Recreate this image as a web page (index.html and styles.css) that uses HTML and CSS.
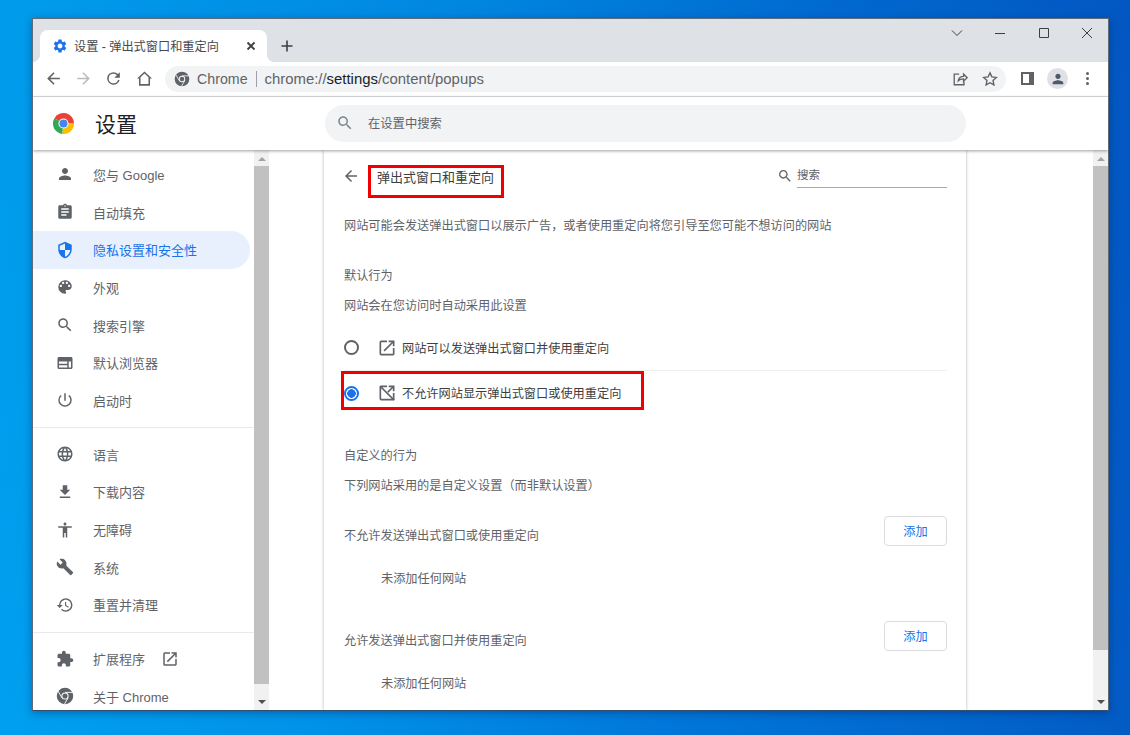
FILE: index.html
```html
<!DOCTYPE html>
<html lang="zh-CN">
<head>
  <meta charset="utf-8" />
  <title>设置 - 弹出式窗口和重定向</title>
  <link rel="stylesheet" href="styles.css">
</head>
<body>
  <!-- shared icons -->
  <svg class="sprite" width="0" height="0" aria-hidden="true">
    <symbol id="i-person" viewBox="0 0 24 24"><path d="M12 12c2.21 0 4-1.79 4-4s-1.79-4-4-4-4 1.79-4 4 1.79 4 4 4zm0 2c-2.67 0-8 1.34-8 4v2h16v-2c0-2.66-5.33-4-8-4z"/></symbol>
    <symbol id="i-clip" viewBox="0 0 24 24"><path d="M19 3h-4.18C14.4 1.84 13.3 1 12 1c-1.3 0-2.4.84-2.82 2H5c-1.1 0-2 .9-2 2v14c0 1.1.9 2 2 2h14c1.1 0 2-.9 2-2V5c0-1.1-.9-2-2-2zm-7 0c.55 0 1 .45 1 1s-.45 1-1 1-1-.45-1-1 .45-1 1-1zm2 14H7v-2h7v2zm3-4H7v-2h10v2zm0-4H7V7h10v2z"/></symbol>
    <symbol id="i-shield" viewBox="0 0 24 24"><path d="M12 1L3 5v6c0 5.55 3.84 10.74 9 12 5.16-1.26 9-6.45 9-12V5l-9-4zm0 10.99h7c-.53 4.12-3.28 7.79-7 8.94V12H5V6.3l7-3.11v8.8z"/></symbol>
    <symbol id="i-palette" viewBox="0 0 24 24"><path d="M12 3a9 9 0 0 0 0 18c.83 0 1.5-.67 1.5-1.5 0-.39-.15-.74-.39-1.01-.23-.26-.38-.61-.38-.99 0-.83.67-1.5 1.5-1.5H16c2.76 0 5-2.24 5-5 0-4.42-4.03-8-9-8zm-5.5 9c-.83 0-1.5-.67-1.5-1.5S5.67 9 6.5 9 8 9.67 8 10.5 7.33 12 6.5 12zm3-4C8.67 8 8 7.33 8 6.5S8.67 5 9.5 5s1.5.67 1.5 1.5S10.33 8 9.5 8zm5 0c-.83 0-1.5-.67-1.5-1.5S13.67 5 14.5 5s1.5.67 1.5 1.5S15.33 8 14.5 8zm3 4c-.83 0-1.5-.67-1.5-1.5S16.67 9 17.5 9s1.5.67 1.5 1.5-.67 1.5-1.5 1.5z"/></symbol>
    <symbol id="i-search" viewBox="0 0 24 24"><path d="M15.5 14h-.79l-.28-.27C15.41 12.59 16 11.11 16 9.5 16 5.91 13.09 3 9.5 3S3 5.91 3 9.5 5.91 16 9.5 16c1.61 0 3.09-.59 4.23-1.57l.27.28v.79l5 4.99L20.49 19l-4.99-5zm-6 0C7.01 14 5 11.99 5 9.5S7.01 5 9.5 5 14 7.01 14 9.5 11.99 14 9.5 14z"/></symbol>
    <symbol id="i-web" viewBox="0 0 24 24"><path d="M20 4H4c-1.1 0-2 .9-2 2v12c0 1.1.9 2 2 2h16c1.1 0 2-.9 2-2V6c0-1.1-.9-2-2-2zM4 10h11v3H4v-3zm0 5h11v3H4v-3zm16 3h-3v-8h3v8z"/></symbol>
    <symbol id="i-power" viewBox="0 0 24 24"><path d="M13 3h-2v10h2V3zm4.83 2.17l-1.42 1.42A6.92 6.92 0 0 1 19 12c0 3.87-3.13 7-7 7A6.995 6.995 0 0 1 7.58 6.58L6.17 5.17A8.932 8.932 0 0 0 3 12a9 9 0 0 0 18 0c0-2.74-1.23-5.18-3.17-6.83z"/></symbol>
    <symbol id="i-globe" viewBox="0 0 24 24"><path d="M11.99 2C6.47 2 2 6.48 2 12s4.47 10 9.99 10C17.52 22 22 17.52 22 12S17.52 2 11.99 2zm6.93 6h-2.95a15.65 15.65 0 0 0-1.38-3.56A8.03 8.03 0 0 1 18.92 8zM12 4.04c.83 1.2 1.48 2.53 1.91 3.96h-3.82c.43-1.43 1.08-2.76 1.91-3.96zM4.26 14C4.1 13.36 4 12.69 4 12s.1-1.36.26-2h3.38c-.08.66-.14 1.32-.14 2 0 .68.06 1.34.14 2H4.26zm.82 2h2.95c.32 1.25.78 2.45 1.38 3.56A7.987 7.987 0 0 1 5.08 16zm2.95-8H5.08a7.987 7.987 0 0 1 4.33-3.56A15.65 15.65 0 0 0 8.03 8zM12 19.96c-.83-1.2-1.48-2.53-1.91-3.96h3.82c-.43 1.43-1.08 2.76-1.91 3.96zM14.34 14H9.66c-.09-.66-.16-1.32-.16-2 0-.68.07-1.35.16-2h4.68c.09.65.16 1.32.16 2 0 .68-.07 1.34-.16 2zm.25 5.56c.6-1.11 1.06-2.31 1.38-3.56h2.95a8.03 8.03 0 0 1-4.33 3.56zM16.36 14c.08-.66.14-1.32.14-2 0-.68-.06-1.34-.14-2h3.38c.16.64.26 1.31.26 2s-.1 1.36-.26 2h-3.38z"/></symbol>
    <symbol id="i-download" viewBox="0 0 24 24"><path d="M19 9h-4V3H9v6H5l7 7 7-7zM5 18v2h14v-2H5z"/></symbol>
    <symbol id="i-access" viewBox="0 0 24 24"><path d="M12 2c1.1 0 2 .9 2 2s-.9 2-2 2-2-.9-2-2 .9-2 2-2zm9 7h-6v13h-2v-6h-2v6H9V9H3V7h18v2z"/></symbol>
    <symbol id="i-wrench" viewBox="0 0 24 24"><path d="M22.7 19l-9.1-9.1c.9-2.3.4-5-1.5-6.9-2-2-5-2.4-7.4-1.3L9 6 6 9 1.6 4.7C.4 7.1.9 10.1 2.9 12.1c1.9 1.9 4.6 2.4 6.9 1.5l9.1 9.1c.4.4 1 .4 1.4 0l2.3-2.3c.5-.4.5-1.1.1-1.4z"/></symbol>
    <symbol id="i-restore" viewBox="0 0 24 24"><path d="M13 3a9 9 0 0 0-9 9H1l3.89 3.89.07.14L9 12H6c0-3.87 3.13-7 7-7s7 3.13 7 7-3.13 7-7 7c-1.93 0-3.68-.79-4.94-2.06l-1.42 1.42A8.954 8.954 0 0 0 13 21a9 9 0 0 0 0-18zm-1 5v5l4.28 2.54.72-1.21-3.5-2.08V8H12z"/></symbol>
    <symbol id="i-puzzle" viewBox="0 0 24 24"><path d="M20.5 11H19V7c0-1.1-.9-2-2-2h-4V3.5C13 2.12 11.88 1 10.5 1S8 2.12 8 3.5V5H4c-1.1 0-1.99.9-1.99 2v3.8H3.5c1.49 0 2.7 1.21 2.7 2.7s-1.21 2.7-2.7 2.7H2V20c0 1.1.9 2 2 2h3.8v-1.5c0-1.49 1.21-2.7 2.7-2.7 1.49 0 2.7 1.21 2.7 2.7V22H17c1.1 0 2-.9 2-2v-4h1.5c1.38 0 2.5-1.12 2.5-2.5S21.88 11 20.5 11z"/></symbol>
    <symbol id="i-open" viewBox="0 0 24 24"><path d="M19 19H5V5h7V3H5a2 2 0 0 0-2 2v14a2 2 0 0 0 2 2h14c1.1 0 2-.9 2-2v-7h-2v7zM14 3v2h3.59l-9.83 9.83 1.41 1.41L19 6.41V10h2V3h-7z"/></symbol>
    <symbol id="i-blocked" viewBox="0 0 24 24"><path d="M19 19H5V5h7V3H5a2 2 0 0 0-2 2v14a2 2 0 0 0 2 2h14c1.1 0 2-.9 2-2v-7h-2v7zM14 3v2h3.59l-5.3 5.3 1.41 1.41L19 6.41V10h2V3h-7z"/><path d="M4.4 3l17 17-1.4 1.4-17-17z"/></symbol>
    <symbol id="i-back" viewBox="0 0 24 24"><path d="M20 11H7.83l5.59-5.59L12 4l-8 8 8 8 1.41-1.41L7.83 13H20v-2z"/></symbol>
    <symbol id="i-gear" viewBox="0 0 24 24"><path d="M19.14 12.94c.04-.3.06-.61.06-.94 0-.32-.02-.64-.07-.94l2.03-1.58a.49.49 0 0 0 .12-.61l-1.92-3.32a.488.488 0 0 0-.59-.22l-2.39.96c-.5-.38-1.03-.7-1.62-.94l-.36-2.54a.484.484 0 0 0-.48-.41h-3.84c-.24 0-.43.17-.47.41l-.36 2.54c-.59.24-1.13.57-1.62.94l-2.39-.96c-.22-.08-.47 0-.59.22L2.74 8.87c-.12.21-.08.47.12.61l2.03 1.58c-.05.3-.09.63-.09.94s.02.64.07.94l-2.03 1.58a.49.49 0 0 0-.12.61l1.92 3.32c.12.22.37.29.59.22l2.39-.96c.5.38 1.03.7 1.62.94l.36 2.54c.05.24.24.41.48.41h3.84c.24 0 .44-.17.47-.41l.36-2.54c.59-.24 1.13-.56 1.62-.94l2.39.96c.22.08.47 0 .59-.22l1.92-3.32c.12-.22.07-.47-.12-.61l-2.01-1.58zM12 15.6c-1.98 0-3.6-1.62-3.6-3.6s1.62-3.6 3.6-3.6 3.6 1.62 3.6 3.6-1.62 3.6-3.6 3.6z"/></symbol>
    <symbol id="i-chrome" viewBox="0 0 24 24"><path fill-rule="evenodd" d="M12 1a11 11 0 1 0 0 22 11 11 0 0 0 0-22zm0 6.2a4.8 4.8 0 1 1 0 9.6 4.8 4.8 0 0 1 0-9.6z"/><circle cx="12" cy="12" r="3.4"/><path fill="none" stroke="#fff" stroke-width="1.2" d="M12 7.2h10.500M7.840 14.400L2.600 5.300M16.160 14.400L11 23.300"/></symbol>
  </svg>

  <div class="window">
    <!-- tab strip -->
    <div class="tabstrip">
      <div class="tab">
        <svg class="tab-gear"><use href="#i-gear"/></svg>
        <span class="tab-title">设置 - 弹出式窗口和重定向</span>
        <svg class="tab-close" viewBox="0 0 10 10"><path d="M1.5 1.5l7 7M8.5 1.5l-7 7"/></svg>
      </div>
      <svg class="new-tab" viewBox="0 0 12 12"><path d="M6 .5v11M.5 6h11"/></svg>
      <div class="win-controls">
        <svg viewBox="0 0 12 12"><path d="M1 3.5l5 5 5-5"/></svg>
        <svg viewBox="0 0 12 12"><path d="M1 6.5h10"/></svg>
        <svg viewBox="0 0 12 12"><path d="M1.5 1.5h9v9h-9z"/></svg>
        <svg viewBox="0 0 12 12"><path d="M1 1l10 10M11 1L1 11"/></svg>
      </div>
    </div>

    <!-- toolbar -->
    <div class="toolbar">
      <svg class="tb-icon" viewBox="0 0 24 24"><use href="#i-back"/></svg>
      <svg class="tb-icon tb-off" viewBox="0 0 24 24"><path d="M4 11h12.170l-5.590-5.590L12 4l8 8-8 8-1.410-1.410L16.170 13H4v-2z"/></svg>
      <svg class="tb-icon" viewBox="0 0 24 24"><path d="M17.65 6.35A7.96 7.96 0 0 0 12 4a8 8 0 1 0 7.73 10h-2.08A6 6 0 1 1 12 6c1.66 0 3.14.69 4.22 1.78L13 11h7V4l-2.35 2.35z"/></svg>
      <svg class="tb-icon tb-home" viewBox="0 0 24 24"><path d="M12 3L2.500 12H5v9h14v-9h2.500L12 3zm5 16H7v-8.600l5-4.600 5 4.600V19z"/></svg>
      <div class="omnibox">
        <svg class="omni-chrome"><use href="#i-chrome"/></svg>
        <span class="omni-site">Chrome</span>
        <span class="omni-sep"></span>
        <span class="omni-url">chrome://<b>settings</b>/content/popups</span>
        <svg class="omni-icon omni-share" viewBox="0 0 18 18"><path d="M8 3.500H2.500v12h11V12M7 11c.6-3.200 2.800-5 6-5V3.500l4 4-4 3.900V8.800c-2.600 0-4.400.6-6 2.200z"/></svg>
        <svg class="omni-icon omni-star" viewBox="0 0 18 18"><path d="M9 2l2.100 4.600 5 .6-3.700 3.400 1 5L9 13.100l-4.400 2.500 1-5L1.900 7.200l5-.6z"/></svg>
      </div>
      <div class="panel-btn"></div>
      <div class="avatar"><svg><use href="#i-person"/></svg></div>
      <div class="dots"><i></i><i></i><i></i></div>
    </div>

    <!-- settings header -->
    <header class="page-head">
      <svg class="logo" viewBox="0 0 24 24">
        <path fill="#ea4335" d="M12 12L2.470 6.500A11 11 0 0 1 23 12z"/>
        <path fill="#fbbc04" d="M12 12L23 12A11 11 0 0 1 10.500 22.900z"/>
        <path fill="#34a853" d="M12 12L10.500 22.900A11 11 0 0 1 2.470 6.500z"/>
        <circle cx="12" cy="12" r="5.300" fill="#fff"/>
        <circle cx="12" cy="12" r="4.200" fill="#4285f4"/>
      </svg>
      <span class="page-title">设置</span>
      <div class="page-search">
        <svg><use href="#i-search"/></svg>
        <span>在设置中搜索</span>
      </div>
    </header>

    <div class="body">
      <!-- left menu -->
      <nav class="side">
        <div class="side-list">
          <a class="item"><svg><use href="#i-person"/></svg><span>您与 Google</span></a>
          <a class="item"><svg><use href="#i-clip"/></svg><span>自动填充</span></a>
          <a class="item active"><svg><use href="#i-shield"/></svg><span>隐私设置和安全性</span></a>
          <a class="item"><svg><use href="#i-palette"/></svg><span>外观</span></a>
          <a class="item"><svg><use href="#i-search"/></svg><span>搜索引擎</span></a>
          <a class="item"><svg><use href="#i-web"/></svg><span>默认浏览器</span></a>
          <a class="item"><svg><use href="#i-power"/></svg><span>启动时</span></a>
          <div class="side-line"></div>
          <a class="item"><svg><use href="#i-globe"/></svg><span>语言</span></a>
          <a class="item"><svg><use href="#i-download"/></svg><span>下载内容</span></a>
          <a class="item"><svg><use href="#i-access"/></svg><span>无障碍</span></a>
          <a class="item"><svg><use href="#i-wrench"/></svg><span>系统</span></a>
          <a class="item"><svg><use href="#i-restore"/></svg><span>重置并清理</span></a>
          <div class="side-line"></div>
          <a class="item"><svg><use href="#i-puzzle"/></svg><span>扩展程序</span><svg class="ext-link"><use href="#i-open"/></svg></a>
          <a class="item"><svg><use href="#i-chrome"/></svg><span>关于 Chrome</span></a>
        </div>
        <div class="scrollbar side-bar">
          <div class="arrow-up"></div>
          <div class="thumb"></div>
          <div class="arrow-down"></div>
        </div>
      </nav>

      <!-- settings page -->
      <main class="main">
        <section class="card">
          <div class="sub-head">
            <svg class="sub-back"><use href="#i-back"/></svg>
            <h1>弹出式窗口和重定向</h1>
            <span class="mark mark-title"></span>
            <div class="sub-search">
              <svg><use href="#i-search"/></svg>
              <span>搜索</span>
            </div>
          </div>
          <p class="desc">网站可能会发送弹出式窗口以展示广告，或者使用重定向将您引导至您可能不想访问的网站</p>

          <h2 class="group">默认行为</h2>
          <p class="note">网站会在您访问时自动采用此设置</p>
          <div class="radio-row first">
            <span class="radio"></span>
            <svg class="radio-icon"><use href="#i-open"/></svg>
            <span>网站可以发送弹出式窗口并使用重定向</span>
          </div>
          <div class="radio-row second">
            <span class="radio on"></span>
            <svg class="radio-icon"><use href="#i-blocked"/></svg>
            <span>不允许网站显示弹出式窗口或使用重定向</span>
            <span class="mark mark-radio"></span>
          </div>

          <h2 class="group group-custom">自定义的行为</h2>
          <p class="note">下列网站采用的是自定义设置（而非默认设置）</p>

          <div class="list-head list-block">
            <span>不允许发送弹出式窗口或使用重定向</span>
            <button class="add">添加</button>
          </div>
          <p class="empty">未添加任何网站</p>
          <div class="list-head list-allow">
            <span>允许发送弹出式窗口并使用重定向</span>
            <button class="add">添加</button>
          </div>
          <p class="empty">未添加任何网站</p>
        </section>
        <div class="scrollbar main-bar">
          <div class="arrow-up"></div>
          <div class="thumb"></div>
          <div class="arrow-down"></div>
        </div>
      </main>
    </div>
  </div>
</body>
</html>
```

FILE: styles.css
```css
/* page + desktop */
*,*::before,*::after{box-sizing:border-box;margin:0;padding:0;}

html,body{height:735px;overflow:hidden;}

body{
  font-family:"Liberation Sans","Noto Sans CJK SC",sans-serif;
  padding:18px 21px 24px 32px;
  background:
    linear-gradient(180deg,rgba(0,40,150,.08),rgba(0,160,240,.12)),
    linear-gradient(100deg,#00a6f2 0%,#0090e8 35%,#0070d6 65%,#0352bf 100%);
  color:#5f6368;
}

.sprite{position:absolute;}

svg{display:block;fill:currentColor;}

.window{
  width:1077px;
  height:693px;
  display:flex;
  flex-direction:column;
  background:#fff;
  border:1px solid #5f6b78;
  border-bottom-color:#2f4f70;
  box-shadow:0 2px 8px rgba(0,30,80,.4);
  overflow:hidden;
}

/* tab strip */
.tabstrip{
  height:43px;
  flex:none;
  display:flex;
  align-items:flex-end;
  background:#dee1e6;
  padding-left:7px;
}

.tab{
  position:relative;
  width:227px;
  height:32px;
  display:flex;
  align-items:center;
  background:#fff;
  border-radius:8px 8px 0 0;
  padding-left:12px;
  font-size:12.2px;
  color:#45494e;
}
.tab::before,.tab::after{
  content:"";
  position:absolute;
  bottom:0;
  width:8px;
  height:8px;
  background:radial-gradient(circle at 0 0,transparent 8px,#fff 8.5px);
}
.tab::before{left:-8px;}
.tab::after{right:-8px;transform:scaleX(-1);}

.tab-gear{width:16px;height:16px;color:#1a73e8;flex:none;}
.tab-title{margin-left:6px;white-space:nowrap;}
.tab-close{
  width:10px;height:10px;margin-left:auto;margin-right:11px;
  fill:none;stroke:#3c4043;stroke-width:1.8;
}

.new-tab{
  width:12px;height:12px;margin:0 0 10px 14px;
  fill:none;stroke:#3c4043;stroke-width:1.6;
}

.win-controls{
  margin-left:auto;
  align-self:flex-start;
  display:flex;
  gap:31.5px;
  padding:8px 15px 0 0;
}
.win-controls svg{width:12px;height:12px;fill:none;stroke:#3c4043;stroke-width:1;}

/* toolbar */
.toolbar{
  height:35px;
  flex:none;
  display:flex;
  align-items:center;
  padding:0 0 1px 10.5px;
  border-bottom:1px solid #dadce0;
  color:#5f6368;
}

.tb-icon{width:19px;height:19px;margin-right:11.4px;flex:none;}
.tb-off{color:#babcbe;}

.omnibox{
  width:841px;
  height:26px;
  flex:none;
  display:flex;
  align-items:center;
  background:#f1f3f4;
  border-radius:13px;
  padding-left:9px;
  font-size:14.2px;
}
.omni-chrome{width:16px;height:16px;flex:none;}
.omni-site{margin-left:7px;}
.omni-sep{width:1px;height:16px;background:#9aa0a6;margin:0 8px;}
.omni-url{font-size:14.9px;}
.omni-url b{font-weight:400;color:#202124;}
.omni-icon{
  width:16px;height:16px;flex:none;margin-right:14px;
  fill:none;stroke:#5f6368;stroke-width:1.5;
}
.omni-share{margin-left:auto;}
.omni-star{margin-right:8px;}

.panel-btn{
  width:13px;height:13px;margin-left:15px;flex:none;
  border:2px solid #5f6368;border-right-width:5px;
}

.avatar{
  width:21px;height:21px;margin-left:13px;flex:none;
  border-radius:50%;
  background:#dfe1e5;
  display:flex;align-items:center;justify-content:center;
}
.avatar svg{width:16px;height:16px;color:#4e5a6b;}

.dots{
  display:flex;flex-direction:column;gap:2px;margin-left:18px;flex:none;
}
.dots i{width:3px;height:3px;border-radius:50%;background:#5f6368;}

/* settings header */
.page-head{
  height:53px;
  flex:none;
  display:flex;
  align-items:center;
  position:relative;
  z-index:2;
  background:#fff;
  box-shadow:0 1px 3px rgba(60,64,67,.5);
  padding:0 0 1px 19px;
}
.logo{width:23px;height:23px;flex:none;}
.page-title{
  margin-left:20px;
  font-size:21px;
  color:#202124;
}
.page-search{
  width:641px;
  height:37px;
  margin-left:188px;
  display:flex;
  align-items:center;
  gap:14px;
  padding-left:11px;
  background:#f1f3f4;
  border-radius:19px;
  font-size:12.3px;
  color:#5f6368;
}
.page-search svg{width:18px;height:18px;color:#80868b;}

/* lower part */
.body{
  flex:1;
  min-height:0;
  display:flex;
}

.side{
  width:236px;
  flex:none;
  display:flex;
  overflow:hidden;
}
.side-list{
  flex:1;
  padding-top:5.5px;
  overflow:hidden;
}

.item{
  height:37.7px;
  display:flex;
  align-items:center;
  padding-left:23px;
  font-size:13px;
  color:#5f6368;
  white-space:nowrap;
}
.item svg{width:18px;height:18px;flex:none;margin-right:19px;}
.item.active{
  width:217px;
  background:#e8f0fe;
  color:#1a73e8;
  border-radius:0 19px 19px 0;
}
.item .ext-link{margin:0 0 0 16px;}

.side-line{height:1px;background:#e8eaed;margin:8px 0 7px;}

.scrollbar{
  width:15px;
  flex:none;
  display:flex;
  flex-direction:column;
  align-items:center;
  background:#f1f1f1;
}
.thumb{width:100%;background:#c1c1c1;}
.arrow-up,.arrow-down{
  width:0;height:0;flex:none;
  border-left:4px solid transparent;
  border-right:4px solid transparent;
}
.arrow-up{border-bottom:4px solid #a3a3a3;margin:7px 0 5px;}
.arrow-down{border-top:4px solid #505050;margin:auto 0 6px;}

.side-bar .thumb{height:518px;}
.main-bar .thumb{height:484px;}

/* settings page */
.main{
  flex:1;
  min-width:0;
  display:flex;
  justify-content:space-between;
  padding-left:55px;
}

.card{
  width:642px;
  height:561px;
  flex:none;
  padding:1px 19px 0 20px;
  overflow:hidden;
  background:#fff;
  box-shadow:0 0 3px rgba(60,64,67,.4);
  font-size:12.2px;
  color:#5f6368;
}

.sub-head{
  position:relative;
  height:50px;
  display:flex;
  align-items:center;
}
.sub-back{width:18px;height:18px;margin-left:-2px;color:#5f6368;}
.sub-head h1{
  margin-left:17px;
  font-size:13px;
  font-weight:400;
  color:#3c4043;
}
.sub-search{
  margin-left:auto;
  width:170px;
  display:flex;
  align-items:center;
  gap:4px;
  font-size:11.5px;
}
.sub-search svg{width:16px;height:16px;flex:none;}
.sub-search span{
  flex:1;
  line-height:24px;
  border-bottom:1px solid #a8a8ac;
  margin-bottom:2px;
}

/* red annotation frames */
.mark{
  position:absolute;
  border:3px solid #f00000;
  pointer-events:none;
}
.mark-title{left:24px;top:14px;width:136px;height:33px;}
.mark-radio{left:-3px;top:0;width:303px;height:39px;}

.desc{height:50px;line-height:50px;}

.group{
  height:40px;
  line-height:40px;
  margin-top:5px;
  font-size:12.2px;
  font-weight:400;
}
.group-custom{margin-top:21px;}
.note{height:20px;line-height:20px;}

.radio-row{
  position:relative;
  display:flex;
  align-items:center;
  color:#3c4043;
}
.radio-row.first{height:46px;margin-top:9px;border-bottom:1px solid #eceef0;}
.radio-row.second{height:44px;}

.radio{
  width:15px;height:15px;flex:none;
  border-radius:50%;
  border:2px solid #5f6368;
  background:#fff;
}
.radio.on{
  border-color:#1a73e8;
  background:radial-gradient(circle,#1a73e8 0 4px,#fff 4.5px);
}
.radio-icon{width:20px;height:20px;margin:0 5px 0 18px;flex:none;color:#5f6368;}

.list-head{
  display:flex;
  justify-content:space-between;
  height:40px;
  line-height:40px;
}
.list-block{margin-top:20px;}
.list-allow{margin-top:22px;}

.add{
  width:63px;
  height:30px;
  background:#fff;
  border:1px solid #dadce0;
  border-radius:4px;
  font:12.2px "Liberation Sans","Noto Sans CJK SC",sans-serif;
  color:#1a73e8;
}

.empty{
  height:40px;
  line-height:40px;
  margin-top:3px;
  padding-left:37px;
}
```
